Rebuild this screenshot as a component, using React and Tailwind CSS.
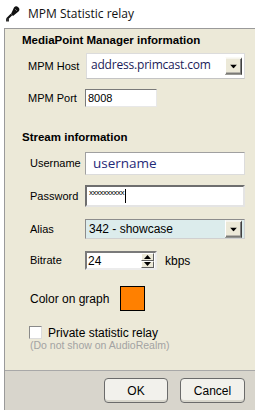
import React from 'react';

function DropButton() {
  return (
    <div className="absolute right-[2px] top-1/2 -translate-y-1/2 w-[17px] h-[17px] bg-[#ece9d8] border border-t-white border-l-white border-b-[#404040] border-r-[#404040] shadow-[inset_-1px_-1px_0_#808080] flex items-center justify-center">
      <svg width="7" height="4" viewBox="0 0 7 4"><path d="M0 0h7L3.5 4z" fill="#000" /></svg>
    </div>
  );
}

function Row({ label, mt, h, children }) {
  return (
    <div className={`flex items-center ${mt} ${h}`}>
      <div className="w-[55px] shrink-0">{label}</div>
      {children}
    </div>
  );
}

export default function App() {
  return (
    <div className="w-[255px] h-[410px] bg-white overflow-hidden flex flex-col text-[11px] text-black font-['Liberation_Sans',Arial,sans-serif]">
      <div className="h-[28px] shrink-0 flex items-center pl-[5px] gap-[8px]">
        <svg width="15" height="16" viewBox="0 0 15 16">
          <path d="M9 1.5a3 3 0 0 1 4.5 4L8 10 6 8z" fill="#111" />
          <path d="M6.5 8.5 2 13" stroke="#111" strokeWidth="2.2" />
          <path d="M1 12.5h3v3H1z" fill="#333" />
          <path d="M10 3l2 2" stroke="#6a6a6a" strokeWidth="1" />
        </svg>
        <span className="text-[12px] font-['Open_Sans',sans-serif] text-[#111]">MPM Statistic relay</span>
      </div>
      <div className="flex-1 ml-[4px] border-l border-t border-[#9a9a9a] flex flex-col">
        <div className="flex-1 bg-[#ece9d8] flex flex-col pt-[4px]">
          <div className="h-[14px] pl-[17px] font-bold text-[11.5px] leading-[14px]">MediaPoint Manager information</div>
          <div className="pl-[23px]">
            <Row label="MPM Host" mt="mt-[6px]" h="h-[26px]">
              <div className="relative ml-[3px] w-[159px] h-[26px] bg-white border border-[#dcdcdc] border-b-[#c4c4c4] flex items-center pl-[4px] pb-[3px]">
                <span className="text-[12px] tracking-[-0.2px] text-[#1b1b58] font-['Open_Sans',sans-serif]">address.primcast.com</span>
                <DropButton />
              </div>
            </Row>
            <Row label="MPM Port" mt="mt-[10px]" h="h-[18px]">
              <div className="ml-[2px] w-[72px] h-[18px] bg-white border border-t-[#7a7a7a] border-l-[#7a7a7a] border-b-[#e8e8e8] border-r-[#e8e8e8] flex items-center pl-[2px]">8008</div>
            </Row>
          </div>
          <div className="mt-[23px] h-[14px] pl-[17px] font-bold text-[11.5px] leading-[14px]">Stream information</div>
          <div className="pl-[25px]">
            <Row label="Username" mt="mt-[8px]" h="h-[23px]">
              <div className="w-[160px] h-[23px] bg-white border border-[#a0a0a0] border-b-[#dcdcdc] border-r-[#dcdcdc] flex items-center pl-[7px]">
                <span className="text-[13.5px] text-[#1f2a78] font-['Open_Sans',sans-serif]">username</span>
              </div>
            </Row>
            <Row label="Password" mt="mt-[10px]" h="h-[22px]">
              <div className="w-[160px] h-[22px] bg-white border-2 border-t-[#6e6e6e] border-l-[#6e6e6e] border-b-[#e4e4e4] border-r-[#e4e4e4] flex items-center pl-[2px]">
                <span className="text-[8px] leading-none tracking-[-0.5px] -mt-[6px]">xxxxxxxxxx</span>
                <span className="w-[1px] h-[14px] bg-black ml-[1px]" />
              </div>
            </Row>
            <Row label="Alias" mt="mt-[12px]" h="h-[20px]">
              <div className="relative w-[160px] h-[20px] bg-[#dcecec] border border-[#8c8c8c] border-b-[#d0d0d0] border-r-[#d0d0d0] flex items-center pl-[3px] text-[12px]">
                342 - showcase
                <DropButton />
              </div>
            </Row>
            <Row label="Bitrate" mt="mt-[12px]" h="h-[19px]">
              <div className="w-[72px] h-[19px] bg-white border-2 border-t-[#7a7a7a] border-l-[#7a7a7a] border-b-[#ececec] border-r-[#ececec] flex items-center pl-[1px] text-[12px]">
                <span className="flex-1">24</span>
                <div className="w-[13px] h-[15px] mr-[1px] flex flex-col">
                  <div className="flex-1 bg-[#ece9d8] border border-t-white border-l-white border-b-[#606060] border-r-[#606060] flex items-center justify-center">
                    <svg width="7" height="4" viewBox="0 0 7 4"><path d="M0 4h7L3.5 0z" fill="#000" /></svg>
                  </div>
                  <div className="flex-1 bg-[#ece9d8] border border-t-white border-l-white border-b-[#606060] border-r-[#606060] flex items-center justify-center">
                    <svg width="7" height="4" viewBox="0 0 7 4"><path d="M0 0h7L3.5 4z" fill="#000" /></svg>
                  </div>
                </div>
              </div>
              <span className="ml-[8px] text-[12px]">kbps</span>
            </Row>
            <div className="mt-[16px] h-[25px] flex items-center">
              <span className="text-[12px]">Color on graph</span>
              <div className="ml-[11px] w-[25px] h-[25px] bg-[#ff8000] border border-black" />
            </div>
            <div className="mt-[15px] h-[13px] flex items-center -ml-[1px]">
              <div className="w-[13px] h-[13px] bg-white border border-[#8a8a8a] border-b-[#dcdcdc] border-r-[#dcdcdc]" />
              <span className="ml-[6px] text-[12px]">Private statistic relay</span>
            </div>
            <div className="mt-[1px] h-[11px] leading-[11px] text-[10.5px] text-[#a3a3a3]">(Do not show on AudioRealm)</div>
          </div>
        </div>
        <div className="h-[40px] shrink-0 bg-[#d8d5cc] border-t border-[#a8a8a8] flex items-start pt-[7px] pl-[99px] gap-[12px]">
          <button className="w-[64px] h-[25px] rounded-[4px] border border-[#6b6b6b] bg-[#f2f1ec] text-[12px] shadow-[inset_0_-2px_0_#d8d6cc]">OK</button>
          <button className="w-[65px] h-[25px] rounded-[4px] border border-[#6b6b6b] bg-[#f2f1ec] text-[12px] shadow-[inset_0_-2px_0_#d8d6cc]">Cancel</button>
        </div>
      </div>
    </div>
  );
}
